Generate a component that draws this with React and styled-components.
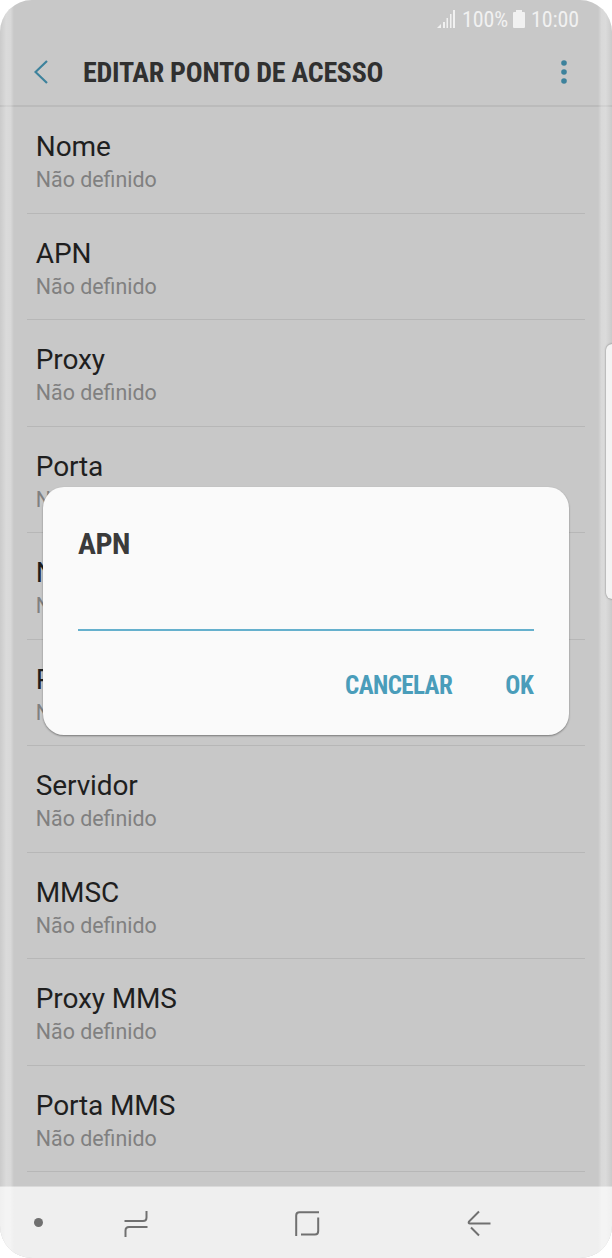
import styled, { createGlobalStyle } from 'styled-components';

const GlobalStyle = createGlobalStyle`
	* {
		box-sizing: border-box;
	}
	body {
		margin: 0;
		background: #fff;
		font-family: Roboto, 'Liberation Sans', sans-serif;
	}
`;

const Phone = styled.div`
	position: relative;
	display: flex;
	flex-direction: column;
	width: 612px;
	height: 1258px;
	border-radius: 32px;
	overflow: hidden;
	background: #c8c8c8;
`;

const StatusBar = styled.div`
	display: flex;
	justify-content: flex-end;
	align-items: center;
	height: 38px;
	padding-right: 33px;
	color: #f1f1f1;
	font-size: 22px;
`;

const StatusText = styled.span`
	width: ${(props) => props.$width}px;
	white-space: nowrap;
	font-stretch: 75%;
	font-family: 'Roboto Condensed', Roboto, sans-serif;
	letter-spacing: -0.1px;
`;

const SignalIcon = styled.svg`
	width: 18px;
	height: 18px;
	margin-right: 7px;
`;

const BatteryIcon = styled.svg`
	width: 12px;
	height: 18px;
	margin: -1px 6px 0 4px;
`;

const Header = styled.header`
	display: flex;
	align-items: center;
	height: 69px;
	padding: 0 42px 0 34px;
	border-bottom: 2px solid #bbb;
`;

const BackIcon = styled.svg`
	width: 14px;
	height: 24px;
	margin-right: 35px;
`;

const Title = styled.h1`
	flex: 1;
	margin: 2px 0 0;
	font-family: 'Roboto Condensed', Roboto, sans-serif;
	font-stretch: 75%;
	font-size: 28px;
	font-weight: 700;
	letter-spacing: -0.26px;
	color: #303030;
	white-space: nowrap;
`;

const MoreIcon = styled.svg`
	width: 12px;
	height: 24px;
`;

const List = styled.div`
	flex: 1;
	margin: 0 27px;
	overflow: hidden;
`;

const Item = styled.div`
	height: 106.55px;
	padding: 22px 9px 0 8.8px;
	border-bottom: 1px solid #b7b7b7;
`;

const ItemName = styled.div`
	font-size: 28px;
	line-height: 36px;
	letter-spacing: -0.12px;
	color: #1f1f1f;
`;

const ItemValue = styled.div`
	font-size: 21.4px;
	line-height: 29px;
	color: #808080;
`;

const NavBar = styled.nav`
	display: flex;
	align-items: center;
	height: 72px;
	padding: 0 34px;
	background: #efefef;
	border-top: 1px solid #dadada;
`;

const NavIcon = styled.svg`
	width: ${(props) => props.$width}px;
	height: 28px;
	margin-right: ${(props) => props.$gap || 0}px;
	fill: none;
	stroke: #707070;
	stroke-width: 2;
`;

const Dialog = styled.div`
	position: absolute;
	left: 43px;
	top: 487px;
	width: 526px;
	height: 248px;
	padding: 38px 35px 0;
	border-radius: 21px;
	background: #fafafa;
	box-shadow: 0 1px 2px rgba(0, 0, 0, 0.4);
`;

const DialogTitle = styled.h2`
	margin: 0;
	font-family: 'Roboto Condensed', Roboto, sans-serif;
	font-stretch: 75%;
	font-size: 30px;
	line-height: 38px;
	letter-spacing: -0.5px;
	color: #3b3b3b;
`;

const Field = styled.div`
	height: 68px;
	border-bottom: 2px solid #65b0cd;
`;

const Actions = styled.div`
	display: flex;
	justify-content: flex-end;
	gap: 53px;
	margin-top: 39px;
	padding-right: 0.5px;
`;

const Action = styled.div`
	font-family: 'Roboto Condensed', Roboto, sans-serif;
	font-stretch: 75%;
	font-size: 25px;
	font-weight: 700;
	line-height: 32px;
	letter-spacing: ${(props) => props.$tracking}px;
	color: #4a9dba;
`;

const Edge = styled.div`
	position: absolute;
	top: 0;
	bottom: 0;
	${(props) => props.$side}: 0;
	width: 14px;
	background: linear-gradient(
		to ${(props) => (props.$side === 'left' ? 'right' : 'left')},
		rgba(255, 255, 255, 0.05),
		rgba(255, 255, 255, 0.34) 45%,
		rgba(255, 255, 255, 0.3) 75%,
		rgba(255, 255, 255, 0)
	);
`;

const EdgeHandle = styled.div`
	position: absolute;
	right: -6px;
	top: 344px;
	width: 12px;
	height: 255px;
	border-radius: 8px;
	background: #f3f3f3;
	box-shadow: 0 0 2px rgba(0, 0, 0, 0.5);
`;

const items = [
	{ name: 'Nome', value: 'Não definido' },
	{ name: 'APN', value: 'Não definido' },
	{ name: 'Proxy', value: 'Não definido' },
	{ name: 'Porta', value: 'N' },
	{ name: 'N', value: 'N' },
	{ name: 'P', value: 'N' },
	{ name: 'Servidor', value: 'Não definido' },
	{ name: 'MMSC', value: 'Não definido' },
	{ name: 'Proxy MMS', value: 'Não definido' },
	{ name: 'Porta MMS', value: 'Não definido' },
];

const App = () => {
	return (
		<>
			<GlobalStyle />
			<Phone>
				<StatusBar>
					<SignalIcon viewBox="0 0 18 18" fill="#f1f1f1">
						<path d="M0 18L4 14V18ZM6 12H8V18H6ZM9.500 8H11V18H9.500ZM13 4H14.500V18H13ZM16 0H18V18H16Z" />
					</SignalIcon>
					<StatusText $width={47}>100%</StatusText>
					<BatteryIcon viewBox="0 0 12 18" fill="#f1f1f1">
						<path d="M3 0H9V2H11Q12 2 12 3V17Q12 18 11 18H1Q0 18 0 17V3Q0 2 1 2H3Z" />
					</BatteryIcon>
					<StatusText $width={48}>10:00</StatusText>
				</StatusBar>
				<Header>
					<BackIcon viewBox="0 0 14 24" fill="none" stroke="#3d829c" strokeWidth="2.2">
						<path d="M13 1L1.500 12L13 23" />
					</BackIcon>
					<Title>EDITAR PONTO DE ACESSO</Title>
					<MoreIcon viewBox="0 0 12 24" fill="#3d829c">
						<circle cx="6" cy="3" r="2.800" />
						<circle cx="6" cy="12" r="2.800" />
						<circle cx="6" cy="21" r="2.800" />
					</MoreIcon>
				</Header>
				<List>
					{items.map((item) => (
						<Item key={item.name}>
							<ItemName>{item.name}</ItemName>
							<ItemValue>{item.value}</ItemValue>
						</Item>
					))}
				</List>
				<NavBar>
					<NavIcon viewBox="0 0 9 28" $width={9} $gap={81}>
						<circle cx="4.500" cy="13.500" r="4.500" fill="#707070" stroke="none" />
					</NavIcon>
					<NavIcon viewBox="0 0 24 28" $width={24} $gap={147}>
						<path d="M0.500 12H19Q22.500 12 22.500 8.500V2M23.500 18H5Q1.500 18 1.500 21.500V28" />
					</NavIcon>
					<NavIcon viewBox="0 0 25 28" $width={25} $gap={147}>
						<path d="M1.200 27V6.500Q1.200 3.200 4.500 3.200H24M23.200 8.500V22Q23.200 25.500 20 25.500H6" />
					</NavIcon>
					<NavIcon viewBox="0 0 24 28" $width={24}>
						<path d="M12 2.500L2 12.500Q1 14.500 3 14.500H23.500M4 18.500L12 26.500" />
					</NavIcon>
				</NavBar>
				<Edge $side="left" />
				<Edge $side="right" />
				<EdgeHandle />
				<Dialog>
					<DialogTitle>APN</DialogTitle>
					<Field />
					<Actions>
						<Action $tracking={-0.6}>CANCELAR</Action>
						<Action $tracking={-0.3}>OK</Action>
					</Actions>
				</Dialog>
			</Phone>
		</>
	);
};

export default App;
